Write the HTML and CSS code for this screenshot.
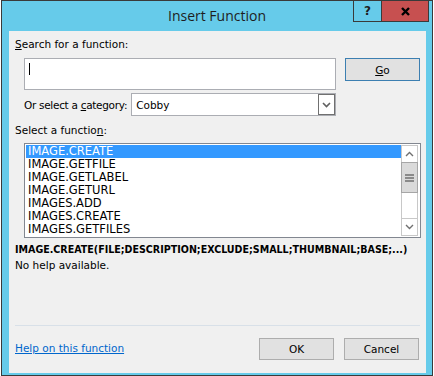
FILE: index.html
```html
<!DOCTYPE html>
<html lang="en">
<head>
    <meta charset="UTF-8">
    <title>Insert Function</title>
    <link rel="stylesheet" href="styles.css">
</head>
<body>
    <!-- Dialog window -->
    <div class="window">
        <div class="titlebar">
            <span class="title">Insert Function</span>
            <div class="controls">
                <span class="ctl ctl-help">?</span>
                <span class="ctl ctl-close">
                    <svg width="9" height="9" viewBox="0 0 9 9"><path d="M1 1 L8 8 M8 1 L1 8" stroke="#000" stroke-width="2.4"/></svg>
                </span>
            </div>
        </div>

        <div class="client">
            <div class="label"><u>S</u>earch for a function:</div>
            <div class="search-row">
                <div class="search-box"><span class="caret"></span></div>
                <button class="btn btn-default"><u>G</u>o</button>
            </div>

            <div class="category-row">
                <span class="category-label">Or select a <u>c</u>ategory:</span>
                <div class="select">
                    <span class="select-value">Cobby</span>
                    <span class="select-drop">
                        <svg width="9" height="6" viewBox="0 0 9 6"><path d="M1 1 L4.5 4.5 L8 1" fill="none" stroke="#606060" stroke-width="1.6"/></svg>
                    </span>
                </div>
            </div>

            <div class="label label-list">Select a functio<u>n</u>:</div>
            <div class="listbox">
                <ul class="items">
                    <li class="selected">IMAGE.CREATE</li>
                    <li>IMAGE.GETFILE</li>
                    <li>IMAGE.GETLABEL</li>
                    <li>IMAGE.GETURL</li>
                    <li>IMAGES.ADD</li>
                    <li>IMAGES.CREATE</li>
                    <li>IMAGES.GETFILES</li>
                </ul>
                <div class="scrollbar">
                    <div class="sb-arrow sb-up">
                        <svg width="9" height="6" viewBox="0 0 9 6"><path d="M1 5 L4.5 1.5 L8 5" fill="none" stroke="#707070" stroke-width="1.4"/></svg>
                    </div>
                    <div class="sb-thumb">
                        <svg width="9" height="8" viewBox="0 0 9 8"><path d="M0 1 H9 M0 4 H9 M0 7 H9" stroke="#707070" stroke-width="1.6"/></svg>
                    </div>
                    <div class="sb-track"></div>
                    <div class="sb-arrow sb-down">
                        <svg width="9" height="6" viewBox="0 0 9 6"><path d="M1 1 L4.5 4.5 L8 1" fill="none" stroke="#707070" stroke-width="1.4"/></svg>
                    </div>
                </div>
            </div>

            <div class="signature">IMAGE.CREATE(FILE;DESCRIPTION;EXCLUDE;SMALL;THUMBNAIL;BASE;...)</div>
            <div class="description">No help available.</div>

            <div class="footer">
                <a href="#" class="help-link">Help on this function</a>
                <div class="buttons">
                    <button class="btn">OK</button>
                    <button class="btn">Cancel</button>
                </div>
            </div>
        </div>
    </div>
</body>
</html>
```

FILE: styles.css
```css
body {
    margin: 0;
    background-color: #ffffff;
    font-family: "DejaVu Sans", sans-serif;
    font-size: 10.5px;
    color: #000000;
}
.window {
    margin-left: 1px;
    width: 430px;
    height: 374px;
    border: 1px solid #3a3a3a;
    background-color: #66cbea; /* Win8 title blue */
    display: flex;
    flex-direction: column;
}
.titlebar {
    position: relative;
    height: 30px;
    text-align: center;
    font-family: "Open Sans", sans-serif;
    font-size: 14px;
    line-height: 29px;
    color: #1e1e1e;
}
.controls {
    position: absolute;
    top: -1px;
    right: 3px;
    display: flex;
}
.ctl {
    height: 20px;
    border: 1px solid #3a3a3a;
    display: flex;
    align-items: center;
    justify-content: center;
    font-family: "DejaVu Sans", sans-serif;
    font-weight: bold;
    font-size: 12px;
}
.ctl-help {
    width: 27px;
}
.ctl-close {
    width: 46px;
    border-left: none;
    background-color: #c75050;
}
.client {
    flex: 1;
    margin: 0 6px 2px 7px;
    padding: 7px 6px 0 6px;
    background-color: #f0f0f0;
    display: flex;
    flex-direction: column;
}
.label {
    line-height: 13px;
}
.label-list {
    margin-top: 8px;
}
.search-row {
    display: flex;
    margin: 7px 0 0 9px;
    gap: 9px;
    align-items: flex-start;
}
.search-box {
    width: 310px;
    height: 30px;
    border: 1px solid #abadb3;
    background-color: #ffffff;
}
.caret {
    display: block;
    width: 1px;
    height: 12px;
    margin: 4px 0 0 4px;
    background-color: #000000;
}
.btn {
    width: 75px;
    height: 22px;
    border: 1px solid #adadad;
    background-color: #e1e1e1;
    font-family: inherit;
    font-size: 10.5px;
    color: #000000;
    padding: 0;
}
.btn-default {
    height: 23px;
    border-color: #3c7fb1;
}
.category-row {
    display: flex;
    align-items: center;
    gap: 4px;
    width: 312px;
    margin: 3px 0 0 9px;
}
.category-label {
    letter-spacing: -0.3px;
}
.select {
    flex: 1;
    height: 21px;
    border: 1px solid #abadb3;
    background-color: #ffffff;
    display: flex;
    align-items: center;
    justify-content: space-between;
}
.select-value {
    padding-left: 4px;
}
.select-drop {
    width: 15px;
    height: 19px;
    border: 1px solid #707070;
    display: flex;
    align-items: center;
    justify-content: center;
}
.listbox {
    margin: 6px -1px 0 9px;
    border: 1px solid #828790;
    background-color: #ffffff;
    display: flex;
    padding: 1px 2px 1px 1px;
    box-sizing: border-box;
    height: 95px;
}
.items {
    list-style: none;
    margin: 0;
    padding: 0;
    flex: 1;
    font-size: 11.5px;
}
.items li {
    height: 13px;
    line-height: 13px;
    padding-left: 2px;
}
.items li.selected {
    background-color: #3399ff;
    color: #ffffff;
}
.scrollbar {
    width: 15px;
    border: 1px solid #c8c8c8;
    display: flex;
    flex-direction: column;
}
.sb-arrow {
    height: 16px;
    display: flex;
    align-items: center;
    justify-content: center;
}
.sb-up {
    border-bottom: 1px solid #c8c8c8;
}
.sb-down {
    border-top: 1px solid #c8c8c8;
}
.sb-thumb {
    height: 29px;
    margin: -1px -1px 0 -1px;
    border: 1px solid #a6a6a6;
    background-color: #dadada;
    display: flex;
    align-items: center;
    justify-content: center;
}
.sb-track {
    flex: 1;
}
.signature {
    margin-top: 5px;
    font-family: "DejaVu Sans Condensed", "DejaVu Sans", sans-serif;
    font-size: 10.6px;
    font-weight: bold;
    line-height: 13px;
}
.description {
    margin-top: 3px;
    line-height: 13px;
}
.footer {
    margin-top: auto;
    border-top: 1px solid #d8e0e8;
    padding: 12px 0 13px 0;
    display: flex;
    align-items: center;
    justify-content: space-between;
}
.help-link {
    color: #0066cc;
    margin-top: -3px;
}
.buttons {
    display: flex;
    gap: 10px;
    margin-right: 1px;
}
```
